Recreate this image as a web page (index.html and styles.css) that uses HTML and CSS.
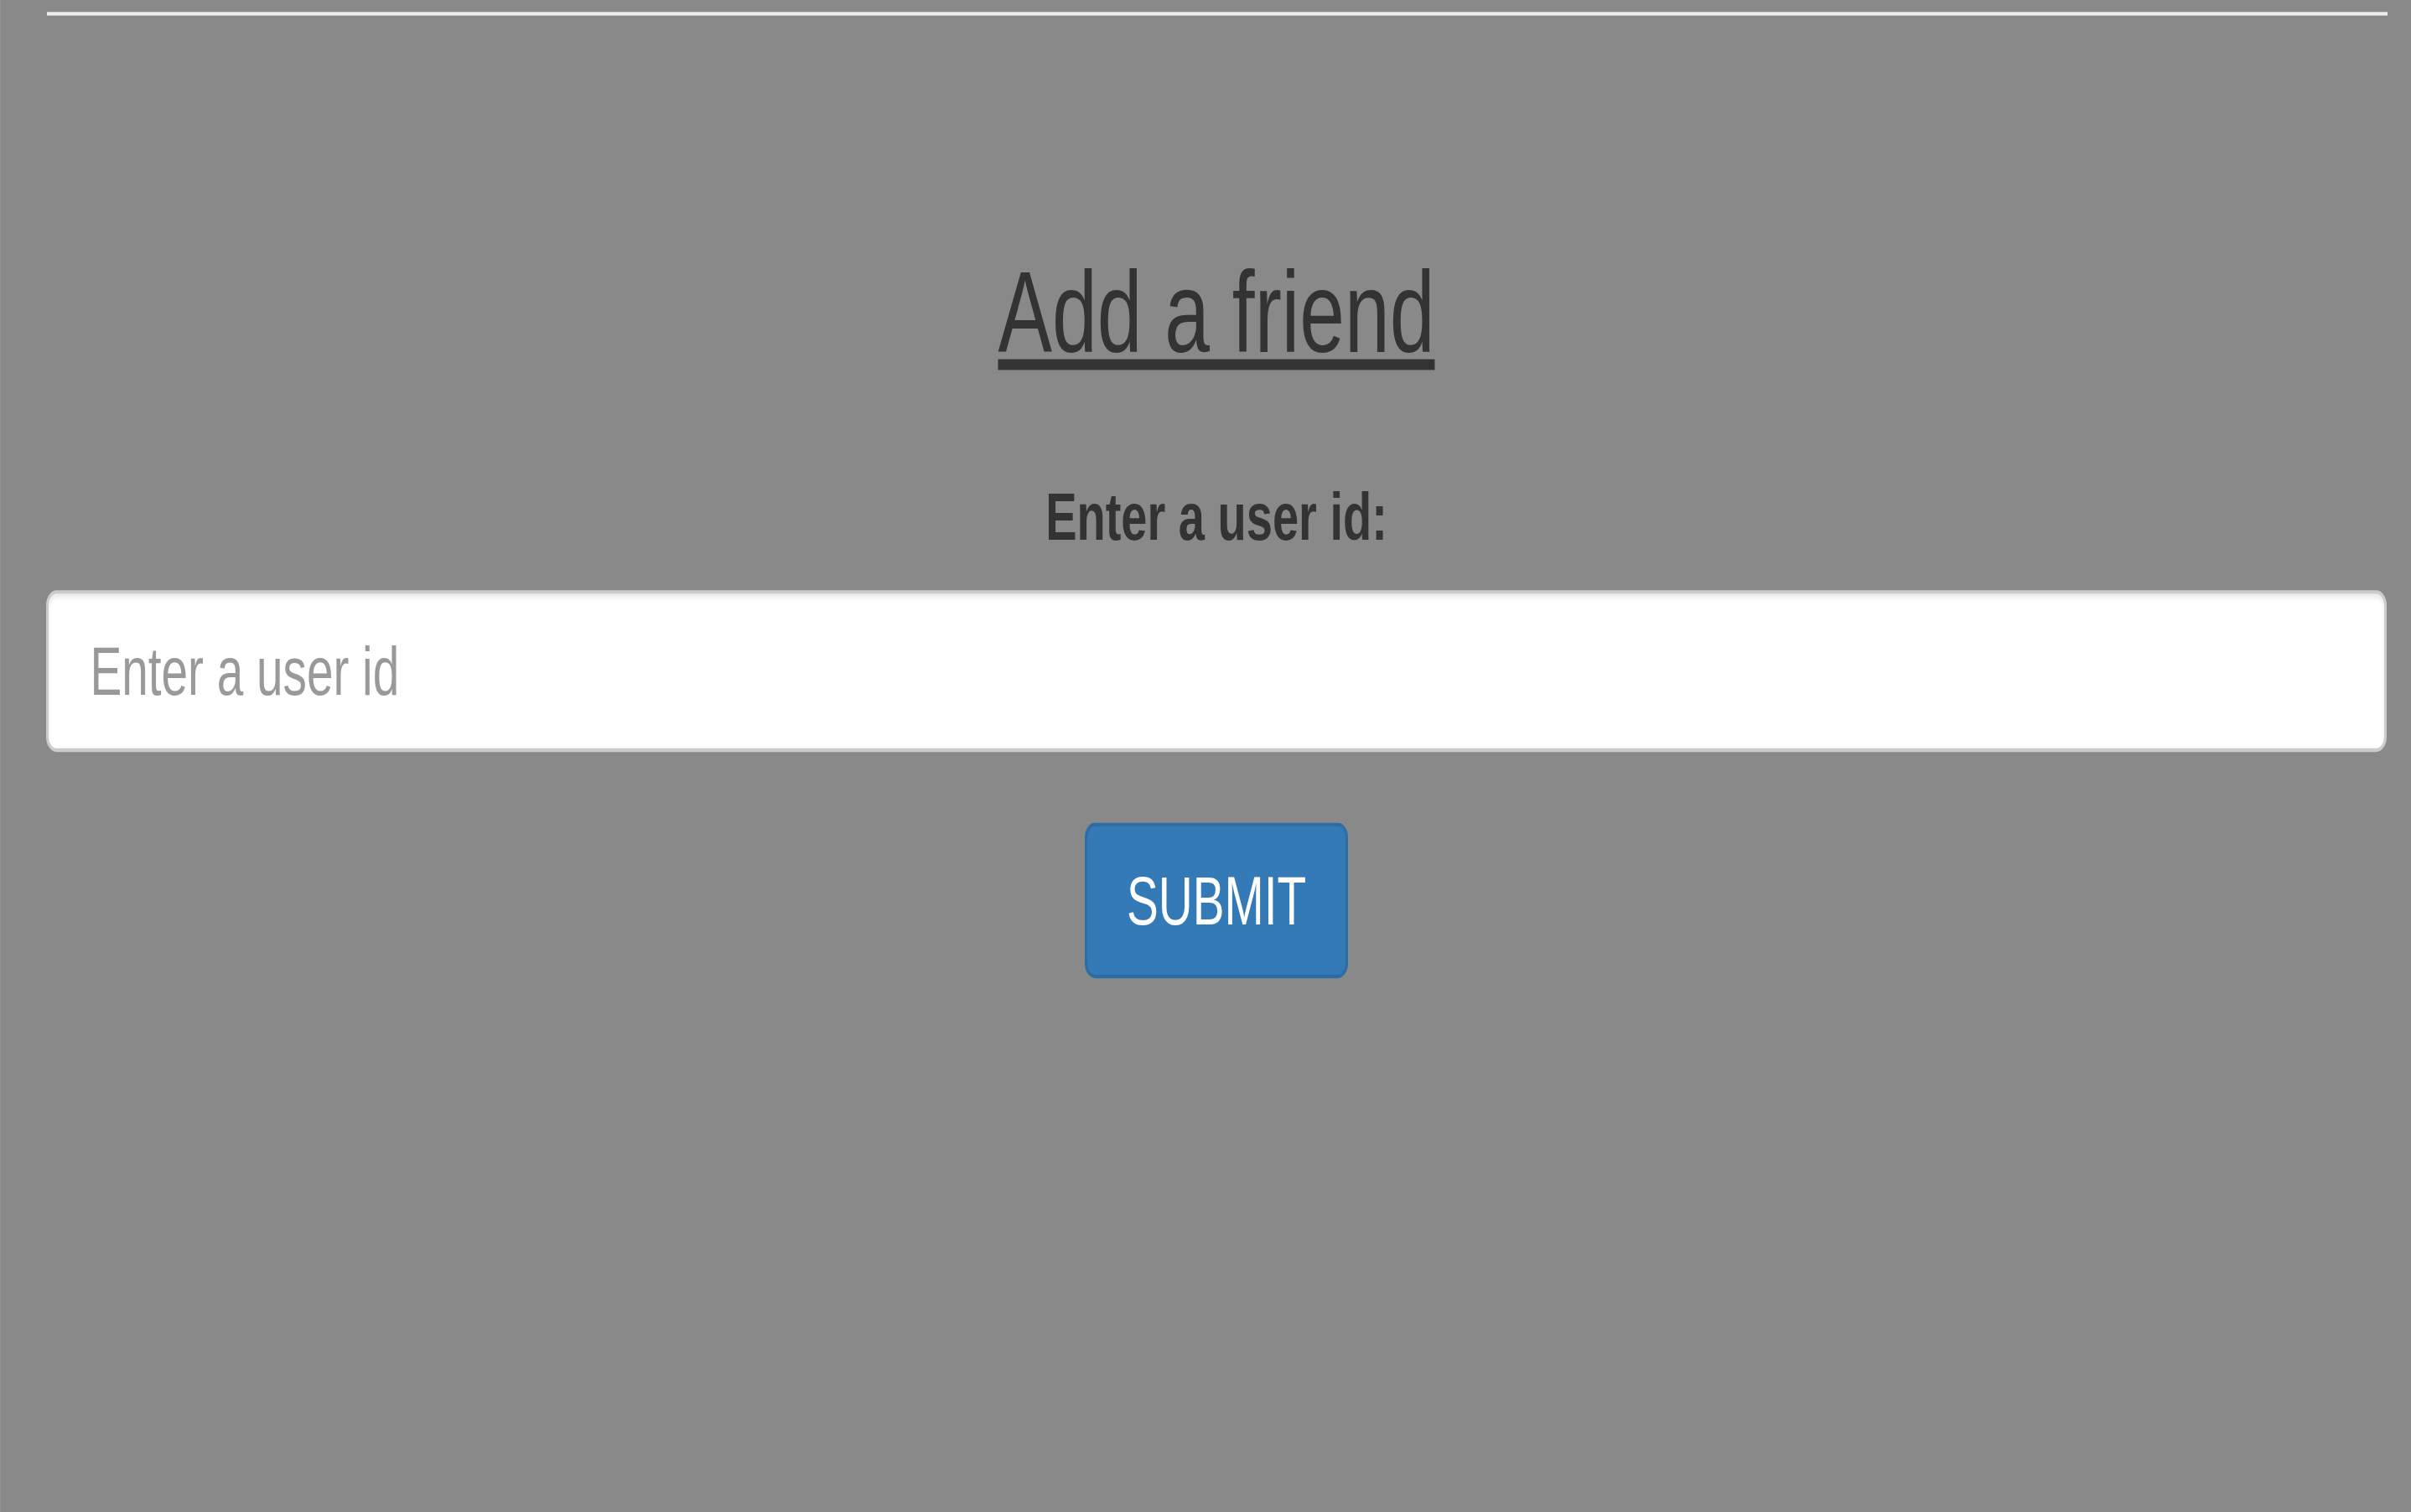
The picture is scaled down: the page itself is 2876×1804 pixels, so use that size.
FILE: index.html
```html
<!DOCTYPE html>
<html lang="en">
<head>
<meta charset="utf-8">
<title>Add a friend</title>
<link rel="stylesheet" href="styles.css">
</head>
<body>
<div class="stage">
  <hr class="rule">
  <main class="form">
    <h1 class="title">Add a friend</h1>
    <label class="label" for="uid">Enter a user id:</label>
    <input id="uid" class="field" type="text" placeholder="Enter a user id">
    <button class="submit" type="button">SUBMIT</button>
  </main>
</div>
</body>
</html>
```

FILE: styles.css
```css
html, body {
  margin: 0;
  padding: 0;
  background: #898989;
  overflow: hidden;
}
body {
  box-shadow: inset 1px 0 0 #929292;
  height: 1804px;
}
/* the reference is stretched vertically: lay out at 70% height, then stretch */
.stage {
  width: 100%;
  height: 1263px;
  box-sizing: border-box;
  padding: 9.8px 29px 0 55px;
  transform: scaleY(1.428571);
  transform-origin: 0 0;
  font-family: "Liberation Sans", Arial, sans-serif;
}
.rule {
  margin: 0 -1px 0 1px;
  border: 0;
  height: 2.8px;
  background: #eeeeee;
}
.form {
  display: flex;
  flex-direction: column;
  align-items: center;
}
.title {
  margin: 192.5px 0 0;
  font-size: 96.6px;
  font-weight: normal;
  line-height: 1.15;
  color: #333333;
  text-decoration: underline;
  text-decoration-thickness: 9.1px;
  text-underline-offset: 6.3px;
}
.label {
  display: block;
  margin-top: 84px;
  font-size: 56px;
  font-weight: bold;
  line-height: 1.15;
  color: #333333;
}
.field {
  align-self: stretch;
  margin-top: 28.7px;
  height: 134.4px;
  box-sizing: border-box;
  border: 3px solid #cccccc;
  border-radius: 12.6px;
  padding: 0 0 0 49.5px;
  font-family: "Liberation Sans", Arial, sans-serif;
  font-size: 56.7px;
  color: #555555;
  background: #ffffff;
  box-shadow: inset 0 3.5px 4px rgba(0, 0, 0, 0.08);
  outline: none;
}
.field::placeholder {
  color: #999999;
  opacity: 1;
}
.submit {
  margin-top: 59.5px;
  width: 314px;
  height: 130.2px;
  box-sizing: border-box;
  padding: 0;
  background: #337ab7;
  border: 3px solid #2e6da4;
  border-radius: 12.6px;
  color: #ffffff;
  font-family: "Liberation Sans", Arial, sans-serif;
  font-size: 56.7px;
  line-height: 1.15;
}
```
